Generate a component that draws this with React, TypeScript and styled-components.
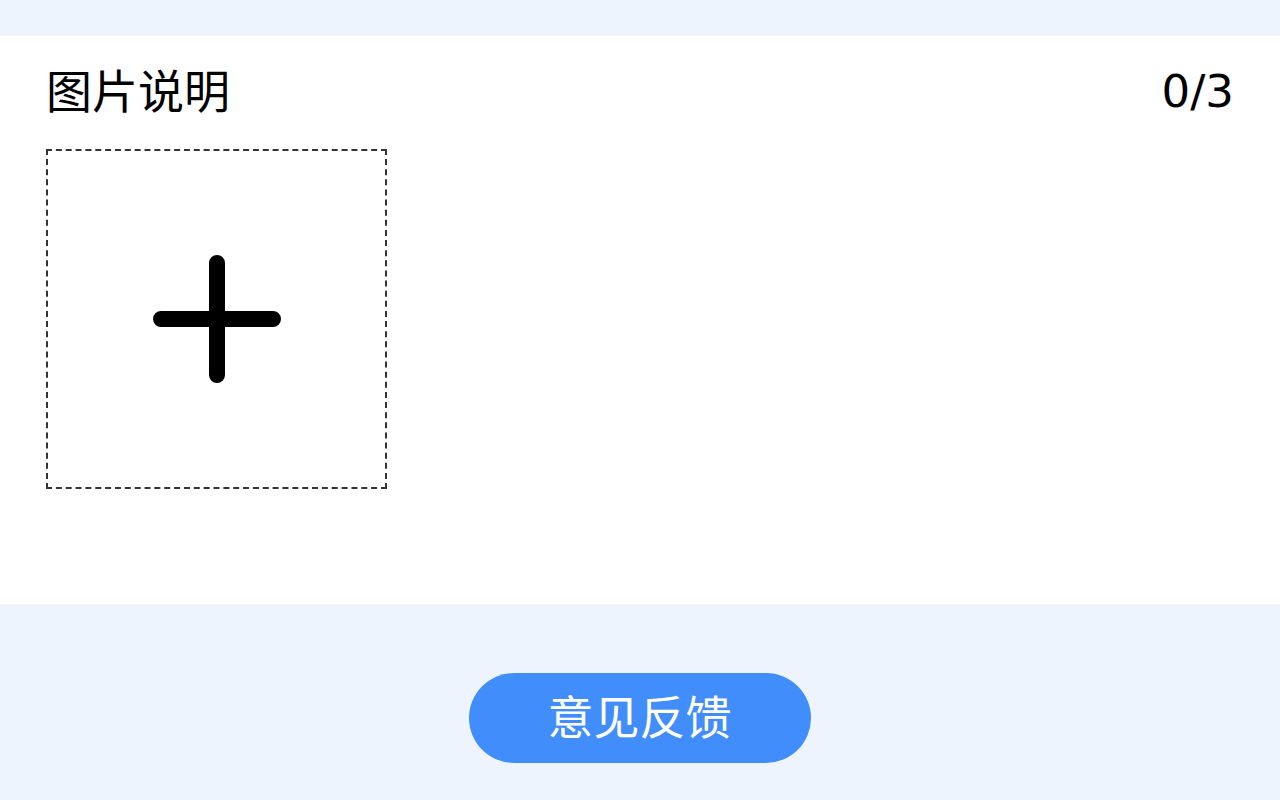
import React from "react";
import styled, { createGlobalStyle } from "styled-components";

const Global = createGlobalStyle`
  html, body {
    margin: 0;
    padding: 0;
    background: #edf4fd;
  }
  body {
    font-family: "DejaVu Sans", "Noto Sans CJK SC", sans-serif;
  }
`;

const Page = styled.div`
  width: 1280px;
  height: 800px;
  display: flex;
  flex-direction: column;
  background: #edf4fd;
  padding-top: 36px;
  box-sizing: border-box;
`;

const Card = styled.section`
  background: #ffffff;
  height: 568px;
  padding: 0 46px;
  box-sizing: border-box;
  display: flex;
  flex-direction: column;
`;

const Header = styled.div`
  display: flex;
  justify-content: space-between;
  align-items: center;
  height: 46px;
  margin-top: 33px;
  font-size: 46px;
  line-height: 46px;
  color: #000;
`;

const Title = styled.span`
  font-family: "DejaVu Sans", "Noto Sans CJK SC", sans-serif;
`;

const Counter = styled.span`
  font-size: 45px;
`;

const UploadBox = styled.div`
  margin-top: 34px;
  width: 341px;
  height: 340px;
  box-sizing: border-box;
  border: 2px dashed #333;
  display: flex;
  align-items: center;
  justify-content: center;
`;

const Footer = styled.div`
  flex: 1;
  display: flex;
  justify-content: center;
  padding-top: 69px;
`;

const Button = styled.button`
  width: 342px;
  height: 90px;
  border: none;
  border-radius: 45px;
  background: #428dfc;
  color: #fff;
  font-family: "DejaVu Sans", "Noto Sans CJK SC", sans-serif;
  font-size: 46px;
  line-height: 90px;
  padding: 0;
  margin-left: -1px;
  cursor: pointer;
`;

const PlusIcon = () => (
  <svg width="128" height="128" viewBox="0 0 128 128">
    <path
      d="M8 64 H120 M64 8 V120"
      stroke="#000"
      strokeWidth="16"
      strokeLinecap="round"
      fill="none"
    />
  </svg>
);

export default function App() {
  return (
    <>
      <Global />
      <Page>
        <Card>
          <Header>
            <Title>图片说明</Title>
            <Counter>0/3</Counter>
          </Header>
          <UploadBox>
            <PlusIcon />
          </UploadBox>
        </Card>
        <Footer>
          <Button>意见反馈</Button>
        </Footer>
      </Page>
    </>
  );
}
